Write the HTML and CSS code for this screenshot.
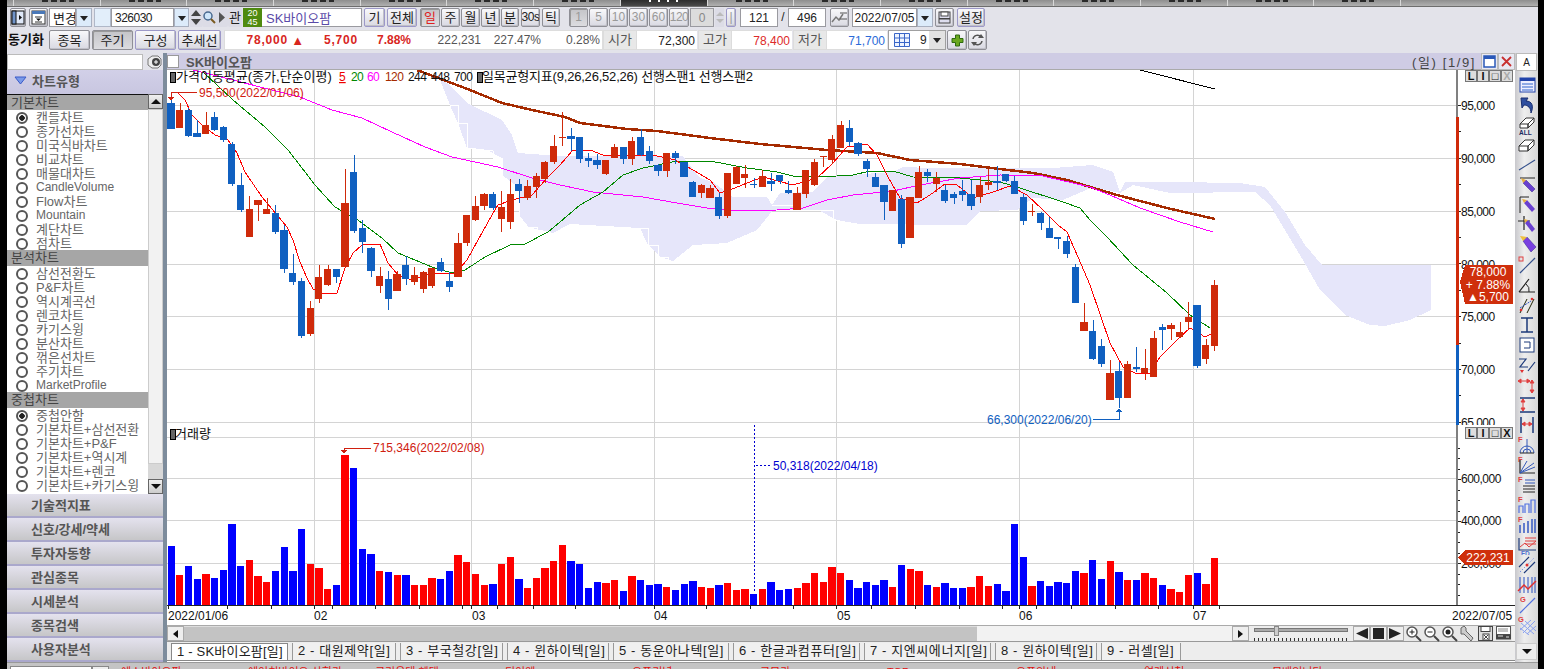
FILE: index.html
```html
<!DOCTYPE html>
<html lang="ko">
<head>
<meta charset="utf-8">
<title>SK바이오팜 차트</title>
<link rel="stylesheet" href="styles.css">
</head>
<body>
<div class="app">
  <div class="toptabs">
    <i class="tt first"></i><i class="tt"></i><i class="tt"></i><i class="tt"></i><i class="tt"></i><i class="tt"></i><i class="tt"></i><i class="tt"></i><i class="tt active"></i><i class="tt"></i><i class="tt"></i><i class="tt"></i><i class="tt"></i><i class="tt"></i><i class="tt"></i><i class="tt"></i><i class="tt"></i><i class="ttend"></i>
  </div>

  <div class="row r1">
    <button class="b w16 ml3"><svg width="14" height="15" viewBox="0 0 14 15"><rect x="1" y="1" width="12" height="13" fill="#dfe8f8" stroke="#111"/><rect x="1" y="1" width="4" height="13" fill="#6f93c8" stroke="#111"/><path d="M8 5l3 2.500-3 2.500z" fill="#111"/></svg></button>
    <button class="b w19 ml3"><svg width="15" height="15" viewBox="0 0 15 15"><rect x="1" y="1" width="13" height="13" fill="#fff" stroke="#333"/><rect x="1" y="1" width="13" height="3" fill="#4a78b8"/><path d="M4 7h7M4 12h7" stroke="#333"/><path d="M5 8.500h5l-2.500 2.500z" fill="#111"/></svg></button>
    <div class="f w27 ml1 white hg">변경</div><div class="dd w16 blue"></div>
    <div class="f w17 ml2 blue"></div><div class="f w63 white code">326030</div><div class="dd w15 blue"></div>
    <div class="spin w12 ml1"><i class="up"></i><i class="dn"></i></div>
    <button class="b w14 plain"><svg width="14" height="15" viewBox="0 0 14 15"><circle cx="6" cy="6" r="4" fill="#cfe6fa" stroke="#4a6a90" stroke-width="1.500"/><path d="M9 9l4 4" stroke="#7a5a20" stroke-width="2"/></svg></button>
    <button class="b w12 plain"><svg width="8" height="13" viewBox="0 0 8 13"><path d="M1 1l6 5.500-6 5.500z" fill="#555"/></svg></button>
    <button class="b w14 plain">관</button>
    <div class="clock ml1">20<br>45</div><div class="f w100 name hg">SK바이오팜</div>
    <button class="b w21 ml2 lav">기</button><button class="b w30 ml2 lav">전체</button>
    <button class="b w20 ml3 press red">일</button><button class="b w19 ml1">주</button><button class="b w19 ml1">월</button><button class="b w19 ml1">년</button><button class="b w18 ml1">분</button><button class="b w19 ml2 nar">30s</button><button class="b w18 ml2">틱</button>
    <button class="b w19 ml9 dim press">1</button><button class="b w19 ml1 dim">5</button><button class="b w19 ml1 dim">10</button><button class="b w19 ml1 dim">30</button><button class="b w19 ml1 dim">60</button><button class="b w20 ml1 dim nar">120</button>
    <div class="f w24 ml1 dimbox">0</div><div class="spin w9 ml1 pale"><i class="up"></i><i class="dn"></i></div>
    <button class="b w10 ml2 lav dim">|</button>
    <div class="f w38 ml4 white ctr">121</div><div class="slash">/</div><div class="f w38 white ctr">496</div>
    <button class="b w19 ml4"><svg width="17" height="15" viewBox="0 0 17 15"><path d="M1 12l4-5 3 3 4-6" fill="none" stroke="#777" stroke-width="1.500"/><path d="M9 3h7M16 9H9" stroke="#555"/></svg></button>
    <div class="f w65 ml3 white ctr">2022/07/05</div><div class="dd w16 blue"></div>
    <button class="b w19 ml2"><svg width="13" height="13" viewBox="0 0 13 13"><rect x="1" y="1" width="11" height="11" fill="#dde" stroke="#444"/><rect x="3" y="1" width="7" height="4" fill="#fff" stroke="#444"/><rect x="1" y="7" width="11" height="1.500" fill="#444"/></svg></button>
    <button class="b w28 ml3 lav">설정</button>
  </div>

  <div class="row r2">
    <div class="sync">동기화</div>
    <button class="b w41 ml3">종목</button><button class="b w41 ml2 press">주기</button><button class="b w41 ml2 lav">구성</button><button class="b w43 ml2 lav">추세선</button>
    <div class="strip ml3">
      <span class="c c63 up1">78,000</span><span class="c c16 up1 sm">▲</span><span class="c c54 up1">5,700</span><span class="c c53 up1 tight">7.88%</span><span class="c c70">222,231</span><span class="c c60">227.47%</span><span class="c c59">0.28%</span>
    </div>
    <div class="lbl">시가</div><div class="val">72,300</div>
    <div class="lbl ml1">고가</div><div class="val upv">78,400</div>
    <div class="lbl ml1">저가</div><div class="val dnv">71,700</div>
    <div class="gridbox ml1"><svg width="16" height="14" viewBox="0 0 16 14"><path d="M.5.5h15v13H.5zM.5 5h15M.5 9.500h15M5.500.5v13M10.500.5v13" fill="#eef4ff" stroke="#3a66c8"/></svg><span class="nine">9</span><i class="dd2"></i></div>
    <button class="b w20 ml1"><svg width="13" height="13" viewBox="0 0 13 13"><path d="M4.500 1h4v3.500H12v4H8.500V12h-4V8.500H1v-4h3.500z" fill="#6aa820" stroke="#2e6a10"/></svg></button>
    <button class="b w19 ml1"><svg width="15" height="14" viewBox="0 0 15 14"><path d="M3 6a4.500 4.500 0 0 1 8-2M12 8a4.500 4.500 0 0 1-8 2" fill="none" stroke="#555" stroke-width="1.500"/><path d="M8 5h6L11 1zM7 9H1l3 4z" fill="#555"/></svg></button>
  </div>

  <div class="main">
    <aside class="side">
      <div class="search"><div class="sinput"></div><svg width="18" height="14" viewBox="0 0 18 14"><path d="M3 4l4-3h6l3 3v6l-3 3H7L3 10z" fill="#eee" stroke="#777"/><circle cx="11" cy="7" r="4" fill="#444"/><path d="M9 7h4M11 5v4" stroke="#fff"/></svg></div>
      <div class="shead"><svg width="13" height="9" viewBox="0 0 13 9"><path d="M1 1h11L6.500 8z" fill="#7a9ae8" stroke="#3a5ac8"/></svg>차트유형</div>
      <div class="slist">
        <div class="items">
          <div class="cat first">기본차트</div>
          <div class="it"><i class="radio on"></i>캔들차트</div>
          <div class="it"><i class="radio"></i>종가선차트</div>
          <div class="it"><i class="radio"></i>미국식바차트</div>
          <div class="it"><i class="radio"></i>비교차트</div>
          <div class="it"><i class="radio"></i>매물대차트</div>
          <div class="it lat"><i class="radio"></i>CandleVolume</div>
          <div class="it"><i class="radio"></i>Flow차트</div>
          <div class="it lat"><i class="radio"></i>Mountain</div>
          <div class="it"><i class="radio"></i>계단차트</div>
          <div class="it"><i class="radio"></i>점차트</div>
          <div class="cat">분석차트</div>
          <div class="it"><i class="radio"></i>삼선전환도</div>
          <div class="it"><i class="radio"></i>P&amp;F차트</div>
          <div class="it"><i class="radio"></i>역시계곡선</div>
          <div class="it"><i class="radio"></i>렌코차트</div>
          <div class="it"><i class="radio"></i>카기스윙</div>
          <div class="it"><i class="radio"></i>분산차트</div>
          <div class="it"><i class="radio"></i>꺾은선차트</div>
          <div class="it"><i class="radio"></i>주기차트</div>
          <div class="it lat"><i class="radio"></i>MarketProfile</div>
          <div class="cat">중첩차트</div>
          <div class="it"><i class="radio on"></i>중첩안함</div>
          <div class="it"><i class="radio"></i>기본차트+삼선전환</div>
          <div class="it"><i class="radio"></i>기본차트+P&amp;F</div>
          <div class="it"><i class="radio"></i>기본차트+역시계</div>
          <div class="it"><i class="radio"></i>기본차트+렌코</div>
          <div class="it"><i class="radio"></i>기본차트+카기스윙</div>
        </div>
        <div class="vscroll"><i class="sb"><b class="tri-up"></b></i><i class="vtrack"></i><i class="vthumb"></i><i class="sb"><b class="tri-dn"></b></i></div>
      </div>
      <div class="sbtn">기술적지표</div>
      <div class="sbtn">신호/강세/약세</div>
      <div class="sbtn">투자자동향</div>
      <div class="sbtn">관심종목</div>
      <div class="sbtn">시세분석</div>
      <div class="sbtn">종목검색</div>
      <div class="sbtn">사용자분석</div>
    </aside>

    <section class="center">
      <div class="title">
        <i class="chk"></i><span class="tname">SK바이오팜</span><span class="tright">(일) [1/9]</span>
        <button class="wbtn"><svg width="13" height="13" viewBox="0 0 13 13"><rect x="1" y="1" width="11" height="11" fill="#fff" stroke="#2a58b8" stroke-width="1.500"/><rect x="1" y="1" width="11" height="3" fill="#2a58b8"/></svg></button>
        <button class="wbtn"><svg width="13" height="13" viewBox="0 0 13 13"><path d="M2 2l9 9M11 2l-9 9" stroke="#c83030" stroke-width="1.800"/></svg></button>
      </div>

      <svg class="chart" width="1348" height="555" viewBox="167 70 1348 555" shape-rendering="crispEdges">
        <g id="grid" class="grid"></g>
        <polygon class="cloud" points="438,75 455,90 467,103 502,120 512,135 518,153 560,156 683,156 688,163 700,178 713,182 733,197 767,197 772,205 780,193 813,192 827,177 853,175 877,173 893,172 903,167 930,168 1000,168 1053,168 1093,165 1113,172 1120,192 1125,182 1173,182 1240,183 1265,187 1285,212 1305,245 1322,265 1431,265 1431,310 1410,320 1385,326 1370,325 1345,315 1320,290 1300,255 1285,230 1270,205 1255,192 1170,193 1133,185 1120,193 1093,187 1063,200 1033,198 1017,210 980,211 967,225 857,224 837,220 818,210 773,210 757,230 727,243 693,245 673,261 660,257 647,243 640,228 570,224 553,233 528,227 520,217 518,187 502,175 502,158 487,150 467,148 458,123 452,110 444,90"/>
        <polyline class="step" points="450,105 458,105 458,123 467,123 467,148 493,151 493,158 502,158 502,177 518,187 520,217 528,227 537,227 537,233 545,233"/>
        <polyline class="step" points="640,228 648,228 648,245 658,245 658,257 668,257 668,261"/>
        <polyline class="step" points="772,205 793,205 793,210 833,210 833,220 857,224"/>

        <polyline class="ln m120" points="417,70 470,90 502,103 532,110 565,117 580,123 627,129 657,131 710,138 760,144 827,150 877,153 910,160 960,164 1000,169 1033,173 1067,180 1117,195 1167,208 1215,219"/>
        <polyline class="ln m60" points="193,70 300,97 332,110 362,118 392,132 425,147 452,157 498,167 532,178 560,185 593,192 643,197 677,203 707,208 743,211 777,210 803,208 827,200 853,195 893,191 920,185 960,178 1000,175 1043,176 1090,187 1117,198 1140,208 1180,222 1213,232"/>
        <polyline class="ln m20" points="203,72 233,100 265,127 288,150 302,168 315,185 335,207 358,220 382,238 398,253 432,267 452,273 465,270 485,257 510,245 525,244 548,232 560,222 580,205 603,192 623,175 643,168 677,161 710,161 747,168 777,172 797,177 837,176 853,175 870,171 893,171 913,177 960,178 1000,182 1017,187 1063,202 1080,208 1090,220 1107,237 1133,265 1167,293 1190,315 1210,328"/>
        <polyline class="ln m5" points="171,92 178,93 185,100 192,115 202,125 215,135 228,140 237,153 245,172 262,197 277,215 287,227 293,240 300,262 307,278 313,289 322,294 337,293 345,268 353,253 362,245 380,244 388,263 398,275 412,280 425,275 438,273 455,274 467,260 478,240 492,215 498,205 512,200 532,195 548,177 560,165 573,150 590,150 603,155 627,155 653,155 675,160 693,170 710,180 720,193 730,190 747,183 763,177 793,185 817,178 833,163 847,147 867,144 877,155 888,177 900,198 917,203 930,195 945,184 957,185 973,198 993,192 1010,186 1027,195 1043,210 1058,225 1067,232 1078,257 1090,285 1110,343 1123,367 1135,373 1150,373 1160,357 1180,337 1190,328 1205,337 1213,333"/>
        <polyline class="ln mk" points="1140,70 1215,89"/>
        <g id="candles"></g>
        <g id="vol"></g>

        <g class="tx" shape-rendering="auto">
          <text x="176" y="81" class="hgt">가격이동평균(종가,단순이평)</text>
          <text x="339" y="81" class="under">5</text><text x="351" y="81" class="green dg">20</text><text x="367" y="81" class="mag dg">60</text><text x="385" y="81" class="brown dg">120</text><text x="408" y="81" class="dg">244</text><text x="431" y="81" class="dg">448</text><text x="454" y="81" class="dg">700</text>
          <text x="482" y="81" class="hgt sq">일목균형지표(9,26,26,52,26) 선행스팬1 선행스팬2</text>
          <text x="199" y="97" class="redt">95,500(2022/01/06)</text>
          <text x="987" y="424" class="bluet">66,300(2022/06/20)</text>
          <text x="175" y="438" class="hgt">거래량</text>
          <text x="373" y="452" class="redt">715,346(2022/02/08)</text>
          <text x="773" y="470" class="navy">50,318(2022/04/18)</text>
          <text x="168" y="620">2022/01/06</text><text x="314" y="620">02</text><text x="472" y="620">03</text><text x="654" y="620">04</text><text x="837" y="620">05</text><text x="1019" y="620">06</text><text x="1193" y="620">07</text><text x="1452" y="620">2022/07/05</text>
          <text x="1461" y="110" class="ax">95,000</text><text x="1461" y="163" class="ax">90,000</text><text x="1461" y="216" class="ax">85,000</text><text x="1461" y="269" class="ax">80,000</text><text x="1461" y="321" class="ax">75,000</text><text x="1461" y="374" class="ax">70,000</text><text x="1461" y="427" class="ax">65,000</text>
        </g>
        <rect x="1459" y="425" width="56" height="12" class="wh"/>
        <g class="tx" shape-rendering="auto"><text x="1461" y="483" class="ax">600,000</text><text x="1461" y="525" class="ax">400,000</text><text x="1461" y="568" class="ax">200,000</text></g>

        <rect x="170" y="72" width="5" height="10" class="mark"/><rect x="477" y="72" width="5" height="10" class="mark"/><rect x="170" y="429" width="5" height="10" class="mark"/>
        <path class="an-r" d="M171 92H197M171 92V98"/><path class="fill-r" d="M168 97h6l-3 4z"/>
        <path class="an-b" d="M1093 419H1119V411"/><path class="fill-b" d="M1116 412h6l-3-4z"/>
        <path class="an-r" d="M344 448H371M344 448V453"/><path class="fill-r" d="M341 450h6l-3 4z"/>
        <path class="an-d" d="M754.500 425V593M756 465H772"/>
        <rect x="1456" y="70" width="2" height="535" class="axis"/>
        <g id="ticks"></g>
        <rect x="1456" y="117" width="3" height="228" class="cr"/><rect x="1456" y="345" width="3" height="80" class="cb"/>

        <polygon class="tag" points="1460,282 1465,265 1513,265 1513,304 1465,304"/>
        <polygon class="tag" points="1458,558 1465,550 1513,550 1513,565 1465,565"/>
        <g class="tagt" shape-rendering="auto">
          <text x="1488" y="276">78,000</text><text x="1488" y="289">+ 7.88%</text><text x="1488" y="301">▲5,700</text><text x="1488" y="562">222,231</text>
        </g>
        <g id="mini" shape-rendering="auto"></g>
      </svg>

      <div class="scrollrow">
        <button class="sbtn2"><b class="tri-l"></b></button><div class="thumb"></div><div class="track"></div>
        <button class="sbtn2"><b class="tri-r"></b></button>
        <div class="slider"><i class="groove"></i><i class="knob"></i><i class="ruler"></i></div>
        <button class="pb"><svg width="15" height="13" viewBox="0 0 15 13"><path d="M14 1v11L2 6.500z" fill="#222"/></svg></button>
        <button class="pb"><svg width="15" height="13" viewBox="0 0 15 13"><rect x="2" y="1" width="11" height="11" fill="#222"/></svg></button>
        <button class="pb"><svg width="15" height="13" viewBox="0 0 15 13"><path d="M1 1v11l12-5.500z" fill="#222"/></svg></button>
        <button class="ib"><svg width="17" height="17" viewBox="0 0 17 17"><circle cx="7" cy="7" r="5" fill="#fff" stroke="#555" stroke-width="1.500"/><path d="M11 11l5 5" stroke="#444" stroke-width="2"/><path d="M4.500 7h5M7 4.500v5" stroke="#222"/></svg></button>
        <button class="ib"><svg width="17" height="17" viewBox="0 0 17 17"><circle cx="7" cy="7" r="5" fill="#fff" stroke="#555" stroke-width="1.500"/><path d="M11 11l5 5" stroke="#444" stroke-width="2"/><path d="M4.500 7h5" stroke="#222"/></svg></button>
        <button class="ib"><svg width="17" height="17" viewBox="0 0 17 17"><circle cx="7" cy="7" r="5" fill="#fff" stroke="#555" stroke-width="1.500"/><path d="M11 11l5 5" stroke="#444" stroke-width="2"/><circle cx="7" cy="7" r="2.500" fill="#222"/></svg></button>
        <button class="ib"><svg width="17" height="17" viewBox="0 0 17 17"><path d="M2 3l3-2 2 2 0 3 7 7-2 3-7-7-3 0z" fill="#ccc" stroke="#666"/></svg></button>
        <button class="ib"><svg width="17" height="17" viewBox="0 0 17 17"><rect x="1.500" y="1.500" width="14" height="14" fill="#ddd" stroke="#444"/><rect x="4" y="1.500" width="9" height="5" fill="#fff" stroke="#444"/><rect x="6" y="9" width="6" height="6" fill="#fff" stroke="#444"/><path d="M7 10l4 4M11 10l-4 4" stroke="#444"/></svg></button>
        <button class="ib"><svg width="17" height="17" viewBox="0 0 17 17"><rect x="1.500" y="1.500" width="14" height="8" fill="#fff" stroke="#555"/><path d="M3 4h10M3 6h10" stroke="#888"/><rect x="1" y="9.500" width="15" height="5" fill="#444"/><path d="M3 11h5M11 12h3" stroke="#ddd"/></svg></button>
      </div>

      <div class="stocktabs">
        <span class="st sel">1 - SK바이오팜[일]</span>
        <span class="st t2">2 - 대원제약[일]</span>
        <span class="st t3">3 - 부국철강[일]</span>
        <span class="st t4">4 - 윈하이텍[일]</span>
        <span class="st t5">5 - 동운아나텍[일]</span>
        <span class="st t6">6 - 한글과컴퓨터[일]</span>
        <span class="st t6">7 - 지엔씨에너지[일]</span>
        <span class="st t4">8 - 윈하이텍[일]</span>
        <span class="st t9">9 - 러셀[일]</span>
      </div>
    </section>

    <aside class="tools">
      <button class="abtn">A</button>
      <div class="ticons">
        <svg viewBox="0 0 20 20"><rect x="3" y="3" width="15" height="14" fill="#eef" stroke="#2244aa"/><rect x="3" y="3" width="15" height="3" fill="#2244aa"/><path d="M5 9h11M5 12h11M5 15h11" stroke="#3366cc"/></svg>
        <svg viewBox="0 0 20 20"><path d="M4 3h7l-2 3c6 0 8 5 5 12 0-5-3-8-7-8l-2 3z" fill="#2f4f9f" stroke="#1a2f70"/></svg>
        <svg viewBox="0 0 20 20"><path d="M3 9l6-6h8l-6 6zM3 9v4h8V9M11 9v4l6-6V3" fill="#fff" stroke="#333"/><text x="2" y="20" class="tinyb">ALL</text></svg>
        <svg viewBox="0 0 20 20"><path d="M2 11l6-6h9l-6 6zM2 11v5h9v-5M11 11v5l6-6V5" fill="#fff" stroke="#333"/></svg>
        <svg viewBox="0 0 20 20"><path d="M2 15L18 5" stroke="#34508c" stroke-width="1.200"/></svg>
        <svg viewBox="0 0 20 20"><path d="M3 3h15" stroke="#222"/><path d="M6 8l3-3 9 9-3 3z" fill="#6a40d0" stroke="#33208a" stroke-width=".5"/><path d="M6 8l3-3-5-2z" fill="#e8b040"/></svg>
        <svg viewBox="0 0 20 20"><path d="M3 18V2h9" fill="none" stroke="#222"/><path d="M7 8l3-3 8 9-3 3z" fill="#6a40d0"/><path d="M7 8l3-3-5-1z" fill="#e8b040"/></svg>
        <svg viewBox="0 0 20 20"><path d="M7 1v14M1 6h12" stroke="#222" stroke-width="1.200"/><path d="M8 8l3-3 7 9-3 3z" fill="#6a40d0"/><path d="M8 8l3-3-4-1z" fill="#e8b040"/></svg>
        <svg viewBox="0 0 20 20"><path d="M6 6l4-4 9 10-5 5z" fill="#7a40e0" stroke="#33208a" stroke-width=".5"/><path d="M6 6l4-4-7-1z" fill="#f0c040"/></svg>
        <svg viewBox="0 0 20 20"><rect x="2" y="2" width="4" height="4" fill="none" stroke="#e04040"/><path d="M3 18L18 3" stroke="#34508c" stroke-width="1.200"/></svg>
        <svg viewBox="0 0 20 20"><path d="M2 17L12 4M2 17h16" stroke="#222" stroke-width="1.200"/><path d="M9 9a8 8 0 0 1 3 8" fill="none" stroke="#222"/></svg>
        <svg viewBox="0 0 20 20"><path d="M3 18L10 4M10 18L17 4" stroke="#222408"/><path d="M3 13L14 6" stroke="#2a50c0" stroke-dasharray="2 1"/><circle cx="4" cy="15" r="1.300" fill="#e03030"/><circle cx="15" cy="4" r="1.300" fill="#e03030"/></svg>
        <svg viewBox="0 0 20 20"><path d="M4 3h12M4 17h12M10 3v14" stroke="#1d3a7a" stroke-width="1.500"/></svg>
        <svg viewBox="0 0 20 20"><rect x="3" y="3" width="14" height="14" fill="#fff" stroke="#1d3a7a"/><path d="M7 7h6v6H7" fill="none" stroke="#1d3a7a"/></svg>
        <svg viewBox="0 0 20 20"><path d="M2 4h7L3 12h8M11 16l7-9" stroke="#1d3a7a" stroke-width="1.200" fill="none"/><path d="M3 15l2 3 2-3z" fill="#e03030"/></svg>
        <svg viewBox="0 0 20 20"><path d="M1 6h12M1 6l3-2v4zM13 6l-3-2v4zM15 5v13M15 5l-2 3h4zM15 18l-2-3h4z" stroke="#e04040" fill="#e04040"/></svg>
        <svg viewBox="0 0 20 20"><path d="M3 3h15M3 17h15" stroke="#1d3a7a" stroke-width="1.500"/><path d="M6 4v12M6 4L4 7h4zM6 16l-2-3h4z" stroke="#e04040" fill="#e04040"/></svg>
        <svg viewBox="0 0 20 20"><path d="M4 2v16M16 2v16" stroke="#1d3a7a" stroke-width="1.500"/><path d="M5 9h10M5 9l3-2v4zM15 9l-3-2v4z" stroke="#e04040" fill="#e04040"/></svg>
        <svg viewBox="0 0 20 20"><text x="1" y="7" class="tinyr">F</text><path d="M3 18a7 7 0 0 1 14 0M6 18a4 4 0 0 1 8 0M10 4v14" fill="none" stroke="#3358b8"/><path d="M3 18h14" stroke="#222"/></svg>
        <svg viewBox="0 0 20 20"><text x="1" y="7" class="tinyr">F</text><path d="M3 5v13h15" fill="none" stroke="#222" stroke-width="1.200"/><path d="M3 18L17 8M3 18L18 12M3 18L10 6" stroke="#3358b8"/></svg>
        <svg viewBox="0 0 20 20"><text x="1" y="7" class="tinyr">F</text><path d="M8 5h10M8 8h10" stroke="#3358b8"/><path d="M6 11h12M6 14h12M6 17h12" stroke="#222"/></svg>
        <svg viewBox="0 0 20 20"><text x="1" y="7" class="tinyr">F</text><path d="M2 18v-7h4v7M8 18V9h4v9M14 18V5h4v13" fill="none" stroke="#5070e0" stroke-width="1.200"/></svg>
        <svg viewBox="0 0 20 20"><text x="1" y="7" class="tinyr">F</text><path d="M3 18v-8M7 18V8M11 18V6M15 18V4M18 18V4" stroke="#2a50c0" stroke-width="1.400"/></svg>
        <svg viewBox="0 0 20 20"><path d="M2 3v12h17" fill="none" stroke="#1d3a7a" stroke-width="1.200"/><path d="M3 12l5-4 4 4 7-6M8 3h11M8 6h11M8 9h11" fill="none" stroke="#e04040"/><text x="4" y="21" class="tinyb fd">FD</text></svg>
        <svg viewBox="0 0 20 20"><path d="M2 12L12 2M7 18L18 7" stroke="#1d3a7a" stroke-width="1.200"/><path d="M3 17L17 3" stroke="#5070e0" stroke-dasharray="1 2"/><circle cx="10" cy="10" r="1.500" fill="#e03030"/></svg>
        <svg viewBox="0 0 20 20"><path d="M3 2v16M7 2v16M11 2v16M15 2v16M18 2v16" stroke="#2a50c0"/><path d="M1 16l6-6 4 4 8-8" fill="none" stroke="#e03030" stroke-width="1.500"/></svg>
        <svg viewBox="0 0 20 20"><text x="3" y="7" class="tinyr">G</text><path d="M3 18L18 3" stroke="#5070e0" stroke-width="1.200"/></svg>
        <svg viewBox="0 0 20 20"><text x="1" y="7" class="tinyr">G</text><path d="M4 8l13 11M8 6l11 10M3 13l9 7M6 18L18 6M3 15L14 5M10 19l9-8" stroke="#88a0f0"/></svg>
      </div>
      <button class="tdown"><b class="tri-dn"></b></button>
    </aside>
  </div>

  <div class="status">
    <span class="sbox"></span><span class="sdd"></span>
    <span class="sred s-a">에스바이오팜</span><span class="sred s-b">에이치바이오 상한가</span><span class="sred s-c">금리우대 혜택</span><span class="sred s-d">티이엠</span><span class="sred s-e">오픈기념</span><span class="sred s-f">공모가</span><span class="sred s-g">TOP</span><span class="sred s-h">오픈안내</span><span class="sred s-i">연계신청</span><span class="sred s-j">무배입니다</span>
  </div>
</div>
<script src="script.js"></script>
</body>
</html>
```

FILE: styles.css
```css
*{box-sizing:border-box}
html,body{margin:0;padding:0;width:1544px;height:669px;overflow:hidden;background:#000}
body,button,text{font-family:"Liberation Sans","Noto Sans CJK KR",sans-serif;font-size:12px;color:#222}
button{padding:0;margin:0;cursor:default}
.app{margin-left:7px;width:1531px;height:669px;display:flex;flex-direction:column;background:#e3e3ea;overflow:hidden}

.toptabs{height:7px;display:flex;background:#8a8a8a;border-bottom:1px solid #6d6d6d}
.tt{display:block;width:86.7px;height:6px;background:linear-gradient(#8e8e8e,#b0b0b0);border-left:1px solid #d8d8d8;position:relative}
.tt.first{width:6px;border-left:0}
.tt::after{content:"";position:absolute;left:28px;top:0;width:32px;height:2px;background:repeating-linear-gradient(90deg,#2a2a2a 0 6px,transparent 6px 9px)}
.tt.first::after{display:none}
.tt.active{background:linear-gradient(#2d2d2d,#4a4a4a)}
.tt.active::after{background:repeating-linear-gradient(90deg,#fff 0 2px,transparent 2px 9px)}
.ttend{flex:1;background:linear-gradient(#8e8e8e,#b0b0b0);border-left:1px solid #d8d8d8}

.row{display:flex;align-items:stretch}
.r1{height:19px;margin-top:1px;margin-bottom:3px}
.r2{height:20px;margin-bottom:3px;padding-left:1px}

.w9{width:9px}.w10{width:10px}.w12{width:12px}.w14{width:14px}.w15{width:15px}.w16{width:16px}.w17{width:17px}.w18{width:18px}.w19{width:19px}.w20{width:20px}.w21{width:21px}.w24{width:24px}.w27{width:27px}.w28{width:28px}.w30{width:30px}.w38{width:38px}.w41{width:41px}.w43{width:43px}.w63{width:63px}.w65{width:65px}.w100{width:100px}
.ml1{margin-left:1px}.ml2{margin-left:2px}.ml3{margin-left:3px}.ml4{margin-left:4px}.ml9{margin-left:9px}

.b{display:flex;align-items:center;justify-content:center;background:linear-gradient(#f8f8fa,#d9d9e2);border:1px solid #8f8f96;border-radius:2px;color:#222;box-shadow:inset -1px -1px 0 #c0c0c8;overflow:hidden;font-size:13px;line-height:15px}
.b.lav{border-color:#9c98c8}
.b.plain{border:0;box-shadow:none;background:#dcdce6}
.b.press{background:linear-gradient(#c4c4c8,#dcdce0);box-shadow:inset 1px 1px 0 #999}
.b.red{color:#e02020}
.b.dim{color:#999;font-size:12px}
.nar{letter-spacing:-.5px;font-size:12px}
.f{display:flex;align-items:center;background:#fff;border:1px solid #9a9aa0;padding-left:3px;white-space:nowrap;overflow:hidden}
.hg{font-size:13px}
.f.ctr{justify-content:center;padding:0}
.f.blue{background:#e2eefa;border-color:#b0b8c8}
.f.code{padding-left:3px;letter-spacing:-.5px}
.f.name{color:#5a4aa8;border-left:0;padding-left:4px}
.f.dimbox{background:#dcdcdc;color:#888;justify-content:center;padding:0}
.dd{background:#dcebfa;border:1px solid #a8b0c0;position:relative}
.dd::after,.dd2::after{content:"";position:absolute;left:50%;top:50%;margin:-2px 0 0 -4px;border:4px solid transparent;border-top:5px solid #222;border-bottom:0}
.spin{display:flex;flex-direction:column;justify-content:center;align-items:center;gap:3px;background:#dcdce6}
.spin .up{border:5px solid transparent;border-bottom:6px solid #444;border-top:0}
.spin .dn{border:5px solid transparent;border-top:6px solid #444;border-bottom:0}
.spin.pale .up{border-width:0 4px 4px;border-bottom-color:#bbb}
.spin.pale .dn{border-width:4px 4px 0;border-top-color:#bbb}
.clock{width:19px;background:#4f8a10;color:#fff;font-size:9px;line-height:9px;text-align:center;padding-top:1px}
.slash{width:10px;text-align:center;line-height:19px}

.sync{width:38px;font-weight:700;font-size:13px;line-height:20px;white-space:nowrap;color:#111}
.strip{width:379px;display:flex;background:#fff;border:1px solid #ddd;align-items:center;color:#555}
.c{display:block;text-align:right;white-space:nowrap}
.c63{width:63px}.c16{width:16px}.c54{width:54px}.c53{width:53px}.c70{width:70px}.c60{width:60px}.c59{width:59px}
.up1{color:#d8261e;font-weight:700;letter-spacing:.8px}
.sm{font-size:13px;letter-spacing:0}
.tight{letter-spacing:0}
.lbl{width:34px;background:#e8e8e8;border:1px solid #dcdcdc;color:#555;font-size:13px;line-height:18px;text-align:center}
.val{width:60px;background:#fff;text-align:right;line-height:20px;color:#222;border-top:1px solid #ddd;border-bottom:1px solid #ddd;padding-right:2px}
.upv{color:#dd2a2a}.dnv{color:#2a6ad8}
.gridbox{width:58px;display:flex;align-items:center;background:#fff;border:1px solid #a0a0a0;padding-left:5px;position:relative}
.nine{margin-left:10px}
.dd2{position:absolute;right:0;top:0;bottom:0;width:16px;background:#e2e2e2}

.main{display:flex;height:609px}
.side{width:156px;flex:none;background:#e3e3ea;display:flex;flex-direction:column}
.search{height:17px;display:flex;align-items:center;gap:2px}
.sinput{width:136px;height:16px;background:#fff;border:1px solid #bbb}
.shead{height:24px;display:flex;align-items:center;gap:5px;padding:0 0 3px 7px;background:linear-gradient(#d2d0e8,#c8c6e0);font-weight:700;color:#555;font-size:13px}
.slist{height:400px;display:flex;background:#fff;overflow:hidden}
.items{width:141px}
.cat{height:16px;line-height:16px;background:#a6a6a6;color:#444;padding-left:4px;font-size:13px}
.cat.first{border-top:1px solid #111;line-height:15px}
.it{height:14px;display:flex;align-items:center;gap:8px;padding:1px 0 0 9px;color:#666;white-space:nowrap;overflow:hidden;line-height:13px;font-size:13px}
.it.lat{font-size:12px}
.radio{display:block;flex:none;width:12px;height:12px;border:2px solid #555;border-radius:50%;background:#fff}
.radio.on{background:radial-gradient(circle,#222 0 2.5px,#fff 3px)}
.vscroll{width:15px;display:flex;flex-direction:column;background:#f0f0f0}
.vscroll i{display:block}
.sb{height:15px;background:linear-gradient(#f0f0f0,#ccc);border:1px solid #666;display:flex!important;align-items:center;justify-content:center}
.vtrack{flex:1;background:#f2f2f2;border:1px solid #ccc}
.vthumb{height:15px;background:#d8d8d8}
.tri-up{border:5px solid transparent;border-bottom:5px solid #111;border-top:0}
.tri-dn{border:5px solid transparent;border-top:5px solid #111;border-bottom:0}
.tri-l{border:4px solid transparent;border-right:5px solid #111;border-left:0}
.tri-r{border:4px solid transparent;border-left:5px solid #111;border-right:0}
.sbtn{height:24px;background:linear-gradient(#e4e2ee,#c6c6c8);border-bottom:2px solid #aaa8cc;padding-left:24px;font-weight:700;color:#555;line-height:23px;font-size:13px}

.center{width:1352px;flex:none;display:flex;flex-direction:column;border-left:4px solid #7d8c9c;background:#fff}
.title{height:17px;background:#cfcce4;border-bottom:1px solid #aaa;display:flex;align-items:center;color:#555}
.chk{width:12px;height:13px;background:#fff;border:1px solid #999;margin-right:7px}
.tname{font-weight:700;font-size:13px;flex:1}
.tright{font-size:13px;color:#444;margin-right:5px;letter-spacing:1.600px}
.wbtn{width:17px;height:17px;background:#e8e8f2;border:1px solid #bbb;display:flex;align-items:center;justify-content:center}
.chart{display:block;flex:none;width:1348px;height:555px}
.grid line{stroke:#d4d4d4}
.cloud{fill:#e6e6fa}
.step{fill:none;stroke:#fff}
.ln{fill:none;stroke-width:1}
.m5{stroke:#f00}.m20{stroke:#008800}.m60{stroke:#f0f}.m120{stroke:#a52a00;stroke-width:2.5}.mk{stroke:#000}
.cr{fill:#cf2a0a}.cb{fill:#1060c0}.vr{fill:#f00}.vb{fill:#00f}
.tx text{fill:#111}
.tx .hgt{font-size:13px}
.tx .sq{letter-spacing:-.2px}
.tx .dg{letter-spacing:-.6px}
.tx .ax{letter-spacing:-.5px}
.tx .under{fill:#e00;text-decoration:underline}
.tx .green{fill:#008800}.tx .mag{fill:#f0f}.tx .brown{fill:#a52a00}
.tx .redt{fill:#d02010}.tx .bluet{fill:#1060c0}.tx .navy{fill:#0000d0}
.wh{fill:#fff}
.mark{fill:#666;stroke:#000}
.an-r{fill:none;stroke:#d02010}.an-b{fill:none;stroke:#1060c0}.an-d{fill:none;stroke:#0000d0;stroke-dasharray:2 2}
.fill-r{fill:#d02010}.fill-b{fill:#1060c0}
.axis{fill:#808080}
.tick{stroke:#222}
.tag{fill:#cf2f0c}
.tagt text{fill:#fff;text-anchor:middle}
.mini{fill:#ddd;stroke:#777}
.minit{fill:#111;font-size:11px;font-weight:700;text-anchor:middle}
.minit.off{fill:#aaa}

.scrollrow{height:17px;display:flex;border-top:1px solid #aaa;border-bottom:1px solid #999;background:#f0f0f0;flex:none}
.sbtn2{width:17px;background:#eee;border:1px solid #aaa;display:flex;align-items:center;justify-content:center}
.thumb{width:793px;background:#c3c3c3;border-top:1px solid #ddd}
.track{width:255px;background:#f2f2f2}
.slider{width:104px;position:relative;background:#ededed}
.slider i{position:absolute;display:block}
.groove{left:5px;right:5px;top:2px;height:4px;background:#aaa;border:1px solid #777}
.knob{left:25px;top:0;width:5px;height:10px;background:#ccc;border:1px solid #888}
.ruler{left:5px;right:5px;bottom:0;height:3px;background:repeating-linear-gradient(90deg,#333 0 1px,transparent 1px 4px)}
.pb{width:17px;background:#eee;border:1px solid #aaa;display:flex;align-items:center;justify-content:center}
.ib{width:18px;background:#e8e8e8;border:0;display:flex;align-items:center;justify-content:center}

.stocktabs{height:19px;display:flex;background:#ededed;padding-left:4px;flex:none;border-bottom:1px solid #888;align-items:flex-end;color:#222}
.st{height:17px;border:1px solid #999;border-top:0;background:#f0f0f0;border-bottom:0;padding-left:5px;line-height:16px;white-space:nowrap;overflow:hidden;margin-right:4px;font-size:13px;letter-spacing:.6px}
.st.sel{width:117px;background:#fff;border:1px solid #888;border-bottom:0;letter-spacing:.2px}
.t2{width:104px}.t3{width:103px}.t4{width:102px}.t5{width:116px}.t6{width:127px}.t9{width:80px}

.tools{width:23px;flex:none;background:linear-gradient(90deg,#c8c8cc,#eeeeee 40%,#d8d8d8);display:flex;flex-direction:column;align-items:center}
.abtn{width:21px;height:18px;background:#fff;border:1px solid #bbb;margin-bottom:4px;font-size:10px}
.ticons{flex:none;height:568px;display:flex;flex-direction:column}
.ticons svg{display:block;flex:none;width:20px;height:20px}
.tinyb{font-size:6.500px;font-weight:700;fill:#1a2a60}
.fd{fill:#5070d0}
.tinyr{font-size:7.500px;font-weight:700;fill:#e04040}
.tdown{width:21px;height:17px;background:#eee;border:1px solid #ccc;display:flex;align-items:center;justify-content:center;flex:none}

.status{flex:1;background:#c4c4c4;position:relative;overflow:hidden;border-top:1px solid #999}
.sbox{position:absolute;left:3px;top:3px;width:82px;height:8px;background:#fff;border:1px solid #888}
.sdd{position:absolute;left:85px;top:3px;width:17px;height:8px;background:#eee;border:1px solid #888}
.sred{position:absolute;top:3px;color:#e01010;font-size:11px;line-height:12px;white-space:nowrap}
.s-a{left:114px}.s-b{left:241px}.s-c{left:368px}.s-d{left:498px}.s-e{left:625px}.s-f{left:753px}.s-g{left:880px}.s-h{left:1009px}.s-i{left:1137px}.s-j{left:1265px}
```

FILE: script.js
```js
var NS = 'http://www.w3.org/2000/svg';
function el(parent, tag, attrs, text) {
  var n = document.createElementNS(NS, tag);
  for (var k in attrs) n.setAttribute(k, attrs[k]);
  if (text) n.textContent = text;
  parent.appendChild(n);
  return n;
}
function px(i) { return 171 + 8.695 * i; }

// high, body top, body bottom, low, colour (r / b)
var candles = [
[100,103,129,129,'b'],[103,110,128,128,'r'],[108,110,136,137,'b'],[120,133,137,137,'b'],[112,125,134,134,'r'],
[112,117,130,131,'b'],[126,127,140,142,'b'],[142,144,184,186,'b'],[173,185,210,212,'b'],[196,209,237,237,'r'],
[200,200,205,221,'r'],[198,209,214,214,'r'],[205,213,232,234,'b'],[225,230,269,273,'b'],[254,273,282,285,'b'],
[278,281,336,338,'b'],[301,308,334,336,'r'],[265,277,299,303,'r'],[265,269,285,286,'r'],[269,269,277,283,'b'],
[169,203,267,267,'r'],[155,172,231,233,'b'],[220,228,242,253,'b'],[247,248,271,277,'b'],[267,276,286,293,'r'],
[271,279,299,310,'b'],[271,274,291,291,'r'],[256,265,279,285,'b'],[267,275,282,285,'r'],[271,272,289,293,'r'],
[268,268,286,288,'r'],[258,262,271,272,'b'],[272,281,287,292,'b'],[233,243,277,277,'r'],[215,215,243,246,'r'],
[196,206,220,221,'r'],[193,194,206,210,'r'],[192,194,208,210,'b'],[191,207,219,232,'r'],[179,194,222,229,'r'],
[179,184,191,203,'b'],[180,186,198,200,'r'],[173,176,187,198,'r'],[161,162,179,183,'r'],[135,146,162,164,'r'],
[112,137,138,146,'r'],[128,136,139,151,'b'],[137,137,159,163,'b'],[153,158,161,167,'b'],[154,160,165,169,'b'],
[160,160,174,175,'r'],[144,147,158,158,'r'],[147,147,159,164,'b'],[137,141,159,165,'r'],[129,137,155,156,'b'],
[146,151,161,164,'b'],[164,165,171,176,'b'],[153,153,171,177,'r'],[151,153,158,164,'b'],[162,162,177,177,'b'],
[181,182,197,197,'b'],[184,185,193,198,'r'],[185,188,198,198,'r'],[193,197,216,219,'b'],[173,173,216,218,'r'],
[166,167,184,184,'r'],[165,174,178,188,'r'],[178,184,185,188,'b'],[170,176,187,187,'r'],[173,181,184,191,'b'],
[175,175,181,184,'b'],[181,190,193,194,'b'],[187,193,210,210,'r'],[170,170,194,198,'r'],[159,162,185,186,'r'],
[156,156,157,167,'r'],[135,139,160,164,'r'],[121,125,148,148,'r'],[120,128,142,146,'b'],[142,143,154,156,'b'],
[159,161,169,177,'b'],[173,177,187,187,'b'],[185,185,202,220,'b'],[190,190,211,211,'r'],[195,199,244,248,'b'],
[197,197,238,238,'r'],[166,172,198,198,'r'],[169,172,176,182,'b'],[172,178,184,192,'r'],[185,190,201,203,'b'],
[192,194,198,204,'b'],[180,191,195,201,'b'],[180,194,206,210,'b'],[177,185,197,203,'r'],[169,182,185,190,'r'],
[166,181,183,190,'b'],[174,174,181,182,'b'],[176,181,194,194,'b'],[194,197,221,225,'b'],[204,211,212,216,'r'],
[212,213,223,230,'b'],[217,228,238,238,'b'],[237,237,239,249,'b'],[236,241,254,258,'b'],[264,267,303,303,'b'],
[303,322,331,331,'r'],[320,331,359,360,'b'],[339,346,364,367,'b'],[360,373,400,400,'r'],[362,371,398,408,'b'],
[361,364,398,398,'r'],[347,367,369,372,'b'],[349,368,373,380,'r'],[331,338,377,377,'r'],[324,327,330,350,'b'],
[323,325,329,340,'r'],[322,332,337,338,'r'],[302,317,322,329,'r'],[305,305,366,368,'b'],[339,345,359,364,'r'],
[280,285,346,351,'r']
];

// colour and bar height in pixels
var volume = 'b59 r30 b39 b26 r31 b27 b35 b81 b39 r45 r29 r23 b34 b58 b34 b76 r41 r37 r16 b20 r150 b137 b56 b51 r34 b33 r30 b30 r20 r20 r27 b26 b34 r50 r43 r31 r20 b21 r41 r48 b26 r17 r27 r37 r44 r60 b44 b41 b17 b23 r22 r25 b14 r29 b25 b20 b21 r18 b15 b21 b24 r18 r17 b20 r22 r15 r16 b11 r16 b23 b15 b16 r17 r22 r32 r23 r38 r32 b25 b17 b23 b20 b25 r18 b40 r36 r34 b20 r18 b22 b17 b17 r18 r29 r19 b21 b14 b81 b48 r19 b24 b19 b23 b22 b34 r32 b45 b26 r44 b33 r25 b25 r32 r27 b20 r16 r13 r30 b32 r21 r47'.split(' ');

var grid = document.getElementById('grid');
[105,158,211,264,316,369,422,437,478,520,563].forEach(function (y) {
  el(grid, 'line', {x1:167, x2:1456, y1:y + .5, y2:y + .5});
});
[314,471,654,836,1019,1193].forEach(function (x) {
  el(grid, 'line', {x1:x + .5, x2:x + .5, y1:70, y2:605});
});

var cg = document.getElementById('candles');
candles.forEach(function (c, i) {
  var x = px(i), l = Math.round(x - 3.6), r = Math.round(x + 3.6), cls = c[4] === 'r' ? 'cr' : 'cb';
  el(cg, 'rect', {x:Math.round(x) , y:c[0], width:1, height:Math.max(1, c[3] - c[0]), 'class':cls});
  el(cg, 'rect', {x:l, y:c[1], width:r - l, height:Math.max(1, c[2] - c[1]), 'class':cls});
});

var vg = document.getElementById('vol');
volume.forEach(function (v, i) {
  var x = px(i), l = Math.round(x - 3.5), r = Math.round(x + 3.8), h = +v.slice(1);
  el(vg, 'rect', {x:l, y:605 - h, width:r - l, height:h, 'class':v[0] === 'r' ? 'vr' : 'vb'});
});

var tg = document.getElementById('ticks');
el(tg, 'line', {x1:167, x2:1515, y1:605.5, y2:605.5, 'class':'tick'});
[168,227,271,314,332,375,419,462,471,497,533,575,619,654,706,750,793,836,871,915,959,1002,1019,1036,1071,1115,1158,1193,1219].forEach(function (x) {
  el(tg, 'line', {x1:x + .5, x2:x + .5, y1:606, y2:609, 'class':'tick'});
});
for (var y = 105; y < 425; y += 26.4) {
  var ry = Math.round(y) + .5;
  el(tg, 'line', {x1:1458, x2:1461, y1:ry, y2:ry, 'class':'tick'});
}
for (var k = 0; k < 16; k++) {
  var vy = Math.round(605 - 10.5 * k) + .5;
  el(tg, 'line', {x1:1458, x2:k % 4 === 0 ? 1461 : 1460, y1:vy, y2:vy, 'class':'tick'});
}

var mini = document.getElementById('mini');
[70,427].forEach(function (top, row) {
  ['L','I','□','X'].forEach(function (t, i) {
    var x = 1465 + i * 12;
    el(mini, 'rect', {x:x + .5, y:top + .5, width:11, height:11, 'class':'mini'});
    el(mini, 'text', {x:x + 6, y:top + 10, 'class':row === 0 && t === 'X' ? 'minit off' : 'minit'}, t);
  });
});
```
